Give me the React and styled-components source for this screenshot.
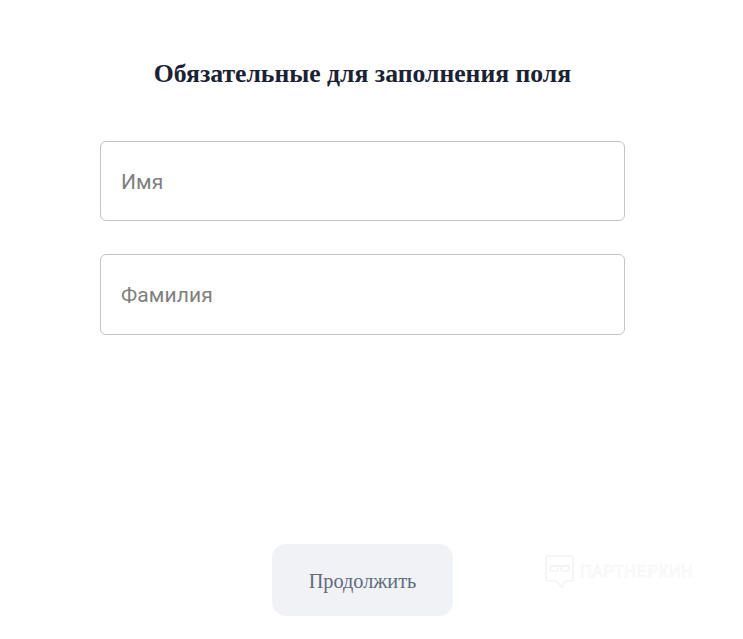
import React from "react";
import styled, { createGlobalStyle } from "styled-components";

const Global = createGlobalStyle`
  html, body { margin: 0; padding: 0; background: #fff; }
  body { font-family: "Liberation Serif", "Times New Roman", serif; }
`;

const Page = styled.div`
  position: relative;
  width: 725px;
  height: 639px;
  overflow: hidden;
  display: flex;
  flex-direction: column;
  align-items: center;
`;

const Title = styled.h1`
  margin: 59px 0 0;
  width: 100%;
  text-align: center;
  font-family: "Liberation Serif", serif;
  font-weight: 700;
  font-size: 25.7px;
  line-height: 30px;
  color: #1a2233;
  box-sizing: border-box;
`;

const Form = styled.form`
  margin-top: 52px;
  width: 525px;
  display: flex;
  flex-direction: column;
  gap: 33px;
`;

const Field = styled.input`
  box-sizing: border-box;
  width: 525px;
  height: ${(p) => p.$h}px;
  padding: 1px 20px 0;
  border: 1px solid #c4c4c4;
  border-radius: 6px;
  background: #fff;
  font-family: Roboto, sans-serif;
  font-size: 21px;
  letter-spacing: 0.1px;
  color: #1a2233;
  outline: none;
  &::placeholder { color: #7f7f7f; opacity: 1; }
`;

const Continue = styled.button`
  margin-top: 209px;
  width: 181px;
  height: 72px;
  padding: 2px 0 0;
  border: none;
  border-radius: 14px;
  background: #f0f2f6;
  color: #5f6b7f;
  font-family: "Liberation Serif", serif;
  font-size: 20.3px;
`;

const Watermark = styled.div`
  position: absolute;
  left: 545px;
  top: 555px;
  display: flex;
  align-items: center;
  gap: 6px;
`;

const WatermarkText = styled.span`
  font-family: "Liberation Sans", sans-serif;
  font-size: 16px;
  line-height: 16px;
  letter-spacing: 0.6px;
  color: transparent;
  -webkit-text-stroke: 0.5px #f1f1f1;
`;

const WatermarkIcon = () => (
  <svg width="29" height="33" viewBox="0 0 29 33" fill="none" stroke="#f3f3f3" strokeWidth="1.6">
    <path d="M3 1h23a2 2 0 0 1 2 2v21a2 2 0 0 1-2 2h-6l-3 6-6-6H3a2 2 0 0 1-2-2V3a2 2 0 0 1 2-2z" />
    <rect x="5" y="11" width="8" height="5" rx="2" />
    <rect x="16" y="11" width="8" height="5" rx="2" />
    <path d="M5 11h19" />
  </svg>
);

export default function App() {
  return (
    <Page>
      <Global />
      <Title>Обязательные для заполнения поля</Title>
      <Form>
        <Field $h={80} placeholder="Имя" />
        <Field $h={81} placeholder="Фамилия" />
      </Form>
      <Continue type="button">Продолжить</Continue>
      <Watermark>
        <WatermarkIcon />
        <WatermarkText>ПАРТНЕРКИН</WatermarkText>
      </Watermark>
    </Page>
  );
}
